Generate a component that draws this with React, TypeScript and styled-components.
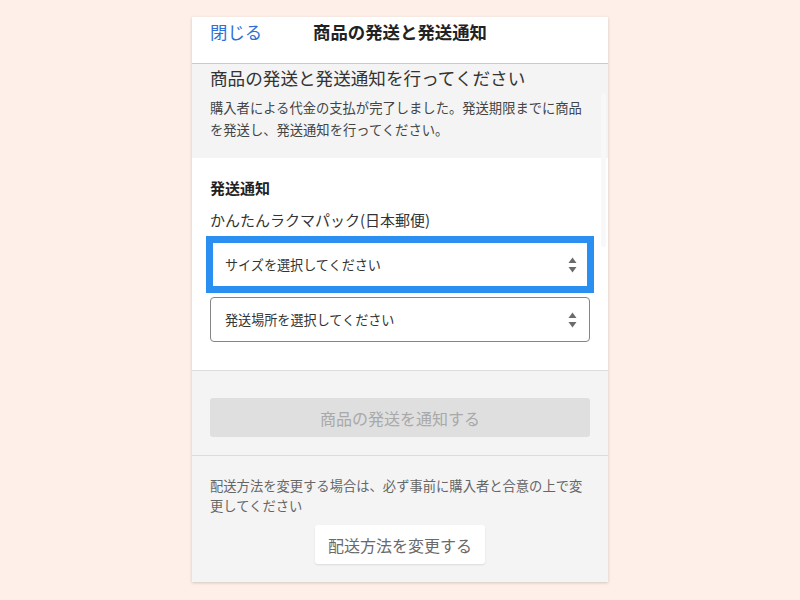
import React from "react";
import styled, { createGlobalStyle } from "styled-components";

const Global = createGlobalStyle`
  html, body { margin: 0; padding: 0; background: #fef0e8; }
  body { font-family: "Noto Sans CJK JP", "Noto Sans", sans-serif; }
  * { box-sizing: border-box; }
`;

const Page = styled.div`
  min-height: 600px;
  display: flex;
  justify-content: center;
  align-items: flex-start;
  padding-top: 17px;
`;

const Card = styled.div`
  position: relative;
  width: 416px;
  background: #f4f4f4;
  box-shadow: 0 1px 3px rgba(0, 0, 0, 0.18);
`;

const Header = styled.header`
  height: 47px;
  background: #fff;
  border-bottom: 1px solid #cacaca;
  display: grid;
  grid-template-columns: 1fr auto 1fr;
  align-items: start;
  padding: 2px 18px 0;
  font-size: 17.4px;
  line-height: 26px;
`;

const CloseLink = styled.a`
  color: #2f6fd6;
  text-decoration: none;
  justify-self: start;
`;

const Title = styled.h1`
  margin: 0;
  font-size: 17.4px;
  line-height: 26px;
  font-weight: 700;
  color: #222;
`;

const Section = styled.section<{ $bg: string; $pt: number; $pb: number; $line?: boolean }>`
  background: ${(p) => p.$bg};
  padding: ${(p) => p.$pt}px 18px ${(p) => p.$pb}px;
  border-bottom: ${(p) => (p.$line ? "1px solid #dcdcdc" : "none")};
`;

const Heading = styled.h2`
  margin: 0;
  font-size: 17.6px;
  line-height: 28px;
  font-weight: 400;
  color: #333;
`;

const Note = styled.p<{ $color: string; $mt: number; $lh: number }>`
  margin: ${(p) => p.$mt}px 0 0;
  font-size: 13.3px;
  line-height: ${(p) => p.$lh}px;
  color: ${(p) => p.$color};
`;

const Label = styled.div`
  font-size: 15px;
  line-height: 20px;
  font-weight: 700;
  color: #222;
`;

const Method = styled.div`
  margin-top: 10px;
  font-size: 15px;
  line-height: 24px;
  color: #333;
`;

const SelectBox = styled.div<{ $focused?: boolean; $mt: number }>`
  margin-top: ${(p) => p.$mt}px;
  height: ${(p) => (p.$focused ? 49 : 45)}px;
  display: flex;
  align-items: center;
  justify-content: space-between;
  padding: 0 ${(p) => (p.$focused ? 10 : 12)}px 0 ${(p) => (p.$focused ? 12 : 14)}px;
  background: #fff;
  font-size: 13.1px;
  color: #333;
  border: ${(p) => (p.$focused ? "3px solid #2b8ff2" : "1px solid #858585")};
  border-radius: ${(p) => (p.$focused ? 0 : 4)}px;
  box-shadow: ${(p) => (p.$focused ? "0 0 0 4px #2b8ff2" : "none")};
`;

const PrimaryButton = styled.button`
  display: block;
  width: 100%;
  height: 39px;
  border: none;
  border-radius: 3px;
  background: #dfdfdf;
  color: #a9a9a9;
  font-family: inherit;
  font-size: 16px;
  padding: 0;
`;

const ButtonRow = styled.div`
  display: flex;
  justify-content: center;
  margin-top: 9px;
`;

const SecondaryButton = styled.button`
  height: 39px;
  padding: 0 13px;
  border: none;
  border-radius: 3px;
  background: #fff;
  color: #6a6a6a;
  font-family: inherit;
  font-size: 16px;
  box-shadow: 0 1px 2px rgba(0, 0, 0, 0.1);
`;

const ScrollThumb = styled.div`
  position: absolute;
  right: 2px;
  top: 76px;
  width: 5px;
  height: 154px;
  border-radius: 3px;
  background: #f8f8f8;
`;

const Arrows = () => (
  <svg width="9" height="18" viewBox="0 0 9 18" aria-hidden="true">
    <path d="M4.5 1.5 L8.5 7 L0.5 7 Z" fill="#6b6b6b" />
    <path d="M4.5 16.5 L8.5 11 L0.5 11 Z" fill="#6b6b6b" />
  </svg>
);

export default function App() {
  return (
    <>
      <Global />
      <Page>
        <Card>
          <Header>
            <CloseLink href="#">閉じる</CloseLink>
            <Title>商品の発送と発送通知</Title>
            <span />
          </Header>
          <Section $bg="#f4f4f4" $pt={0} $pb={17}>
            <Heading>商品の発送と発送通知を行ってください</Heading>
            <Note $color="#444" $mt={5} $lh={22}>
              購入者による代金の支払が完了しました。発送期限までに商品を発送し、発送通知を行ってください。
            </Note>
          </Section>
          <Section $bg="#fff" $pt={20} $pb={28} $line>
            <Label>発送通知</Label>
            <Method>かんたんラクマパック(日本郵便)</Method>
            <SelectBox $focused $mt={8}>
              <span>サイズを選択してください</span>
              <Arrows />
            </SelectBox>
            <SelectBox $mt={8}>
              <span>発送場所を選択してください</span>
              <Arrows />
            </SelectBox>
          </Section>
          <Section $bg="#f4f4f4" $pt={27} $pb={18} $line>
            <PrimaryButton disabled>商品の発送を通知する</PrimaryButton>
          </Section>
          <Section $bg="#f4f4f4" $pt={20} $pb={18}>
            <Note $color="#666" $mt={0} $lh={20}>
              配送方法を変更する場合は、必ず事前に購入者と合意の上で変更してください
            </Note>
            <ButtonRow>
              <SecondaryButton>配送方法を変更する</SecondaryButton>
            </ButtonRow>
          </Section>
          <ScrollThumb />
        </Card>
      </Page>
    </>
  );
}
